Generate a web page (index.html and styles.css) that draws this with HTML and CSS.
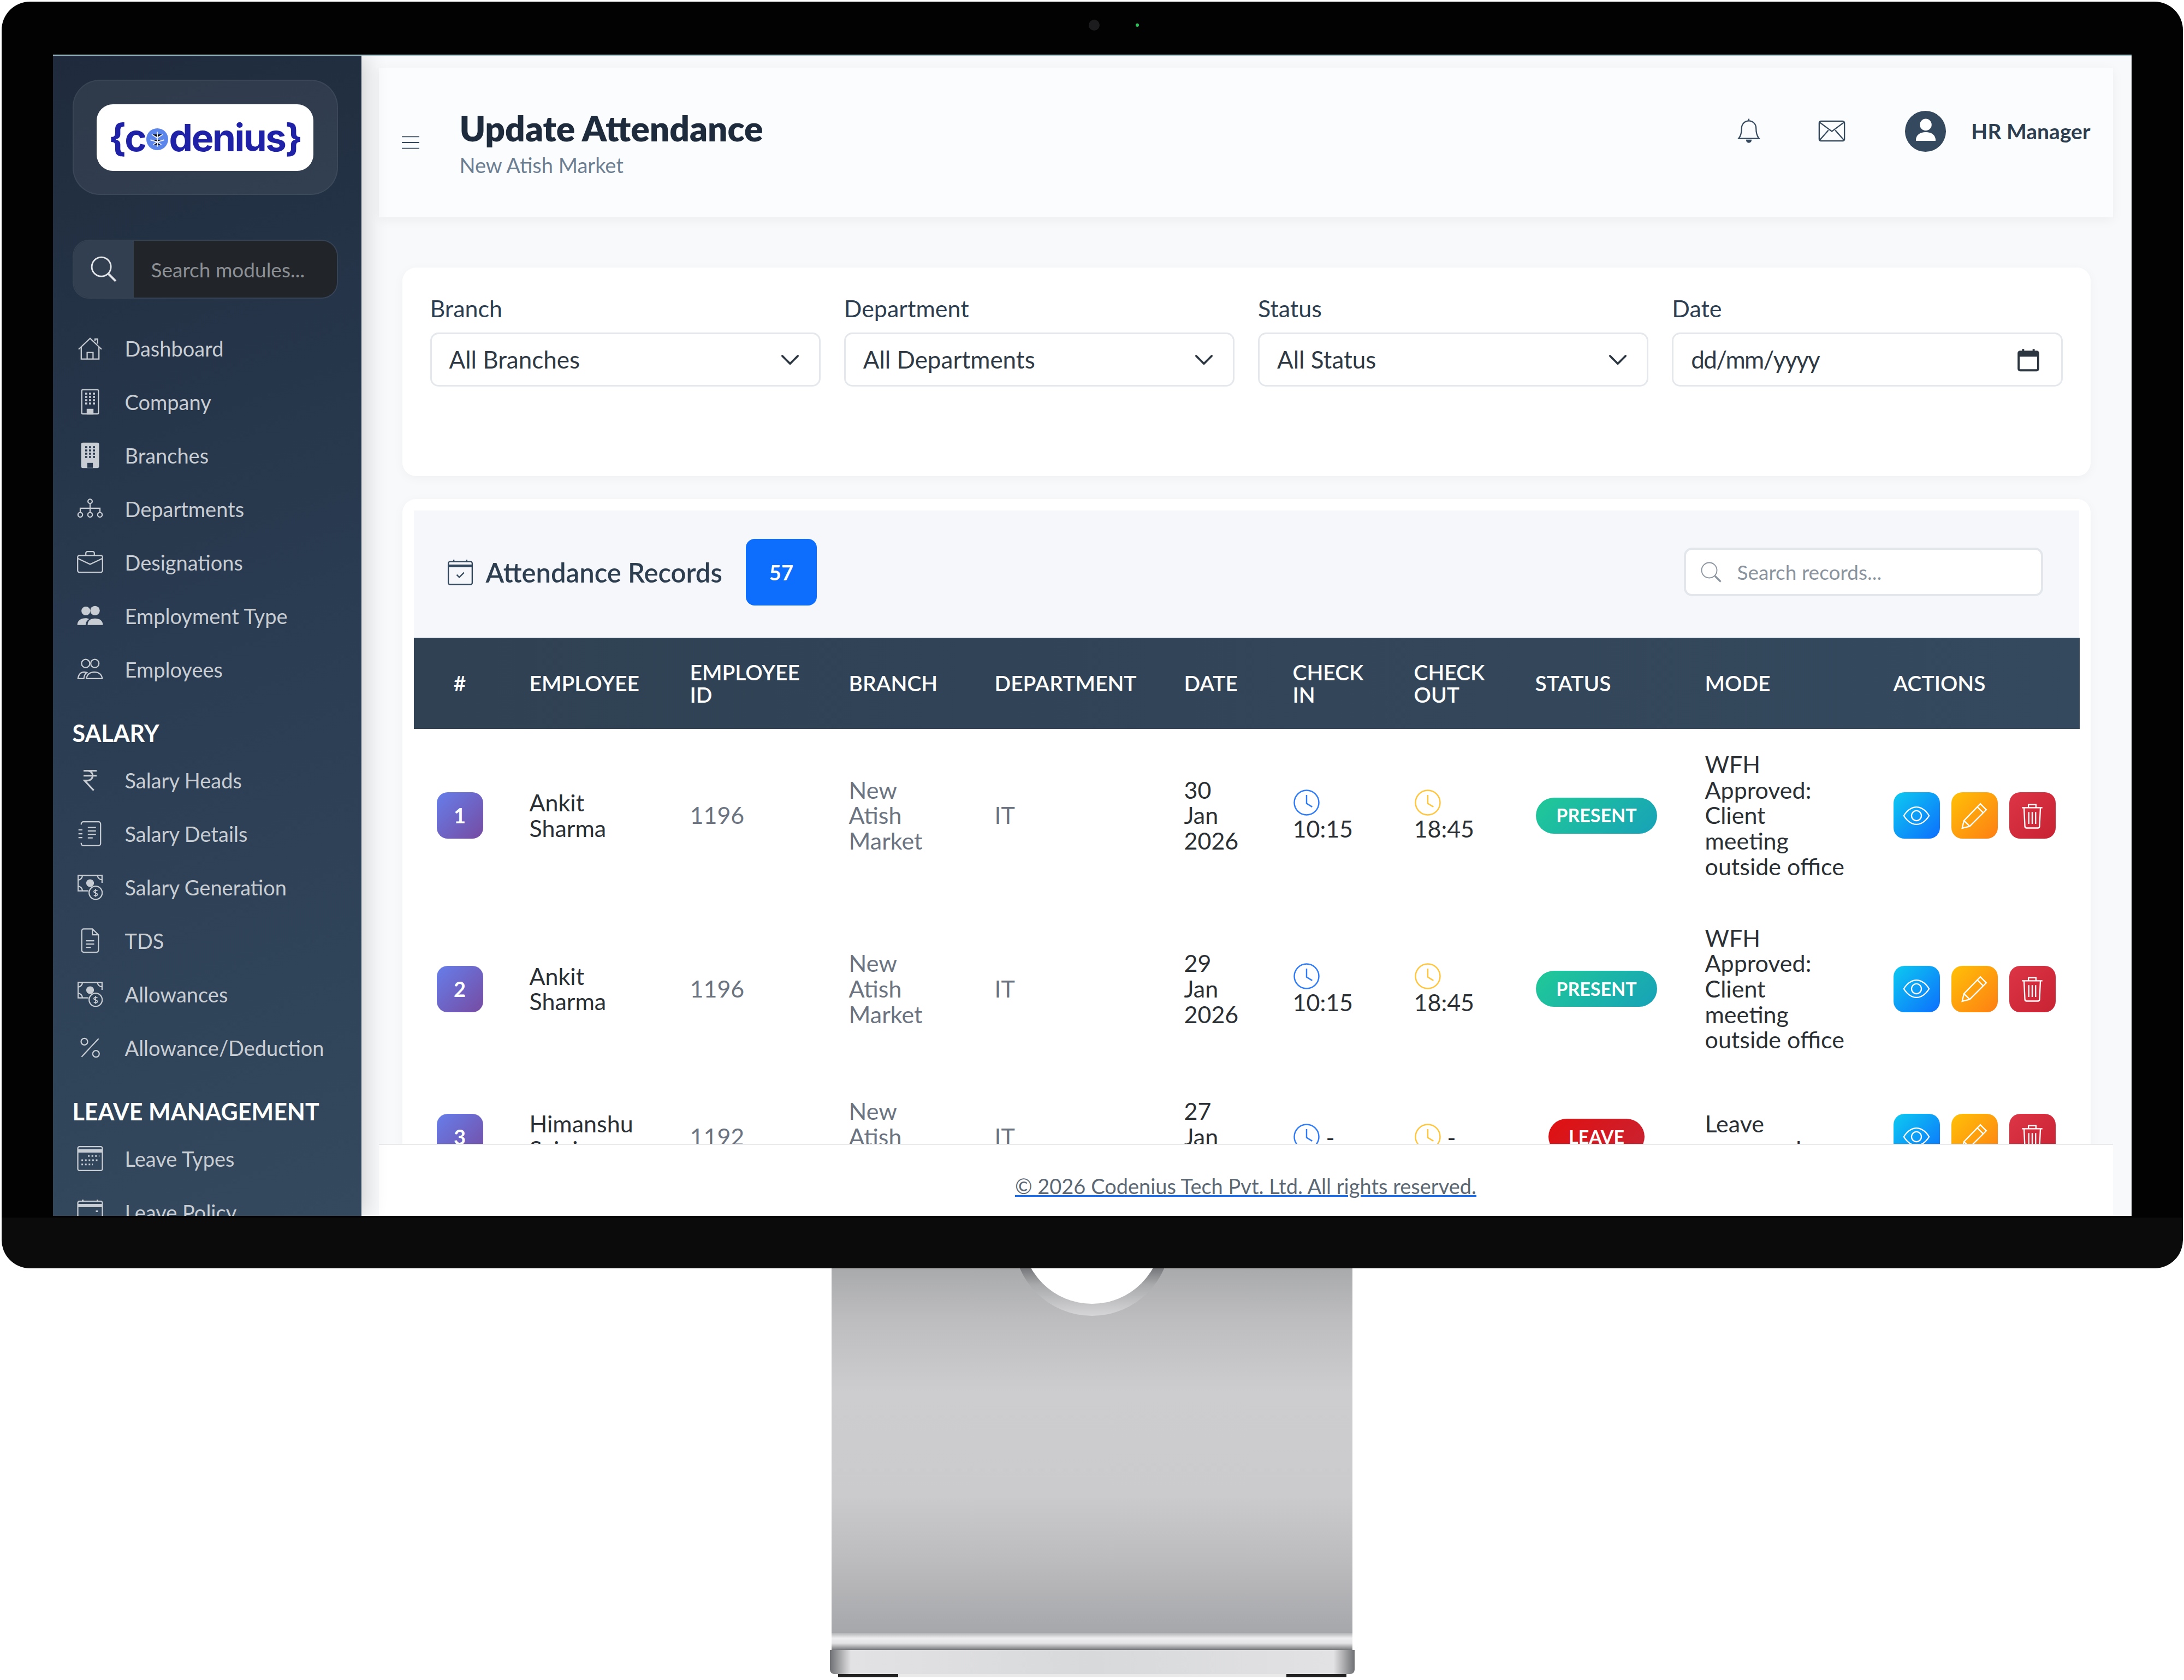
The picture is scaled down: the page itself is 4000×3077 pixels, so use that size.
FILE: index.html
```html
<!DOCTYPE html>
<html lang="en">
<head>
    <meta charset="UTF-8">
    <title>Update Attendance</title>
    <link rel="stylesheet" href="styles.css">
</head>
<body>
<svg class="sprite" xmlns="http://www.w3.org/2000/svg">
    <symbol id="i-house" viewBox="0 0 16 16"><path d="M1 8.6 8 1.9l7 6.7M2.6 7.2v7.3h10.8V7.2M6.2 14.5v-4h3.6v4M11 3.6V2.3h1.6v2.9"/></symbol>
    <symbol id="i-building" viewBox="0 0 16 16"><rect x="2.9" y=".6" width="10.2" height="14.8" rx=".7"/><path d="M5 3h6M5 5h6M5 7h6M5 9h6" stroke-dasharray="1.3 1.05" stroke-width="1.2"/><path d="M6.3 15.4v-2.8h3.4v2.8z" fill="currentColor"/></symbol>
    <symbol id="i-building-fill" viewBox="0 0 16 16"><rect x="2.9" y=".6" width="10.2" height="14.8" rx=".7" fill="currentColor"/><path d="M5 3h6M5 5h6M5 7h6M5 9h6" stroke="#293a4e" stroke-dasharray="1.3 1.05" stroke-width="1.2"/><path d="M6.3 15.6v-3h3.4v3z" fill="#293a4e" stroke="none"/></symbol>
    <symbol id="i-diagram" viewBox="0 0 16 16"><circle cx="8" cy="3.4" r="1.3"/><circle cx="2" cy="11.6" r="1.4"/><circle cx="8" cy="11.6" r="1.4"/><circle cx="14" cy="11.6" r="1.4"/><path d="M8 4.7v5.5M2 10.2V7.6h12v2.6"/></symbol>
    <symbol id="i-briefcase" viewBox="0 0 16 16"><rect x=".4" y="3.8" width="15.2" height="10.2" rx="1"/><path d="M5.4 3.8V2.4a1 1 0 0 1 1-1h3.2a1 1 0 0 1 1 1v1.4M.4 5.6 8 9.2l7.6-3.6"/></symbol>
    <symbol id="i-people-fill" viewBox="0 0 16 16"><g fill="currentColor" stroke="none"><circle cx="5.4" cy="5" r="2.7"/><circle cx="11" cy="4.8" r="2.9"/><path d="M.2 13.6c0-2.8 2.2-4.2 5-4.2.9 0 1.7.2 2.3.5C6 10.8 5.3 12.1 5.3 13.6z"/><path d="M6.5 13.6c0-2.8 1.9-4 4.5-4s4.8 1.2 4.8 4z"/></g></symbol>
    <symbol id="i-people" viewBox="0 0 16 16"><circle cx="5.3" cy="4.4" r="2.5"/><circle cx="10.9" cy="4.4" r="2.5"/><path d="M.6 13.6c.3-2 1.3-3.9 3.7-4 .7 0 1.2.1 1.7.3-1 .8-1.7 2.2-1.8 3.7zM5.8 13.6c.2-2.4 2.1-4 4.8-4s4.6 1.6 4.8 4z"/></symbol>
    <symbol id="i-rupee" viewBox="0 0 16 16"><path stroke-width="1.05" d="M4 2.2h8M4 5.2h8M4 2.2h2.6a3 3 0 0 1 0 6H4.6l5.6 6"/></symbol>
    <symbol id="i-journal" viewBox="0 0 16 16"><path d="M2.6 2.4V2A1.3 1.3 0 0 1 3.9.7h9.2a1.3 1.3 0 0 1 1.3 1.3v12a1.3 1.3 0 0 1-1.3 1.3H3.9A1.3 1.3 0 0 1 2.6 14v-.4"/><path d="M6.6 4.2h5M6.6 6.3h5M6.6 8.4h5M6.6 10.5h3M.9 5.6h2.4M.9 8h2.4M.9 10.4h2.4"/></symbol>
    <symbol id="i-cash" viewBox="0 0 16 16"><path d="M7 10.2H.7V.8h14.6v4.5"/><path d="M.7 3.6A2.8 2.8 0 0 0 3.3.8M.7 7.4a2.8 2.8 0 0 1 2.6 2.8M12.5.8a2.8 2.8 0 0 0 2.8 2.6"/><circle cx="8" cy="5.5" r="2" fill="currentColor"/><circle cx="11.4" cy="11.4" r="4"/><path stroke-width=".6" d="M12.5 10.3c-.4-.5-2.2-.6-2.2.4s2.2.7 2.2 1.7-1.8 1-2.2.4M11.4 9v4.8"/></symbol>
    <symbol id="i-file" viewBox="0 0 16 16"><path d="M2.9 2A1.2 1.2 0 0 1 4.1.8h5.3l3.7 3.6v9.4a1.2 1.2 0 0 1-1.2 1.2H4.1a1.2 1.2 0 0 1-1.2-1.2zM9.4.8v3.6h3.7M5.5 8h5M5.5 10h5M5.5 12h3"/></symbol>
    <symbol id="i-percent" viewBox="0 0 16 16"><circle cx="4.5" cy="4.3" r="2"/><circle cx="11.6" cy="11.7" r="2"/><path d="M13.2 2.4 2.8 13.6"/></symbol>
    <symbol id="i-cal-week" viewBox="0 0 16 16"><rect x=".5" y=".7" width="15" height="14.6" rx="1"/><path d="M.5 3.3h15" stroke-width="2"/><path d="M6.7 6.4h7M2.7 9h10.8M2.7 11.6h7" stroke-dasharray="1 1.2" stroke-width="1"/></symbol>
    <symbol id="i-cal" viewBox="0 0 16 16"><rect x=".5" y="1.4" width="15" height="14" rx="1"/><path d="M.5 4h15" stroke-width="2"/><path d="M3.5.4v1.5M12.5.4v1.5M11.5 7.5h1.2" stroke-width="1"/></symbol>
    <symbol id="i-search" viewBox="0 0 16 16"><circle cx="6.6" cy="6.6" r="5.6"/><path d="M10.8 10.8 15 15" stroke-width="1.3"/></symbol>
    <symbol id="i-bell" viewBox="0 0 16 16"><path d="M8 1.8a4.4 4.4 0 0 0-4.4 4.4c0 3.6-.8 5.2-1.8 6.3h12.4c-1-1.1-1.8-2.7-1.8-6.3A4.4 4.4 0 0 0 8 1.8zM8 .5v1.3"/><path d="M6.7 13.6a1.3 1.3 0 0 0 2.6 0z" fill="currentColor"/></symbol>
    <symbol id="i-mail" viewBox="0 0 16 16"><rect x=".6" y="2.2" width="14.8" height="11.6" rx="1"/><path d="M1 3l7 5.2L15 3M1 13.2l5-5.7M15 13.2l-5-5.7"/></symbol>
    <symbol id="i-user" viewBox="0 0 16 16"><circle cx="8" cy="4.8" r="2.6" fill="currentColor"/><path d="M3.4 12.6c0-2.4 1.9-3.7 4.6-3.7s4.6 1.3 4.6 3.7z" fill="currentColor"/></symbol>
    <symbol id="i-menu" viewBox="0 0 16 16"><path d="M.5 3h15M.5 8h15M.5 13h15"/></symbol>
    <symbol id="i-chevron" viewBox="0 0 16 16"><path stroke-width="1.5" stroke-linecap="round" stroke-linejoin="round" d="m2 5 6 6 6-6"/></symbol>
    <symbol id="i-date" viewBox="0 0 16 16"><rect x="1.5" y="2.6" width="13" height="12.4" rx="1" stroke-width="1.4"/><path d="M1.5 4.6h13" stroke-width="2.6"/><path d="M4.5.8v2M11.5.8v2" stroke-width="1.4"/></symbol>
    <symbol id="i-cal-check" viewBox="0 0 16 16"><rect x="1" y="1.8" width="14" height="13.4" rx="1"/><path d="M1 4.3h14" stroke-width="1.6"/><path d="M4.2.6V2M11.8.6V2"/><path d="m5.9 9.5 1.5 1.5 2.8-2.8"/></symbol>
    <symbol id="i-clock" viewBox="0 0 16 16"><circle cx="8" cy="8" r="7.2"/><path d="M8 3.5V8.5l3.3 2"/></symbol>
    <symbol id="i-eye" viewBox="0 0 16 16"><path d="M.6 8S3.4 2.9 8 2.9 15.4 8 15.4 8 12.6 13.1 8 13.1.6 8 .6 8z"/><circle cx="8" cy="8" r="2.9"/></symbol>
    <symbol id="i-pencil" viewBox="0 0 16 16"><path d="m11.5 1 3.5 3.5-9.7 9.7L.9 15.3l1-4.4zM9.7 2.8l3.5 3.5M1.9 10.9l3.4 3.3"/></symbol>
    <symbol id="i-trash" viewBox="0 0 16 16"><path d="M2 3.3h12M5.8 3.3V1.5h4.4v1.8M3.2 3.3l.5 11a1 1 0 0 0 1 .9h6.6a1 1 0 0 0 1-.9l.5-11M6 5.8v7M8 5.8v7M10 5.8v7"/></symbol>
    <symbol id="i-brain" viewBox="0 0 16 16"><circle cx="8" cy="8" r="8" fill="#5d86ea" stroke="none"/><path stroke="#e6eeff" stroke-width=".8" d="M8 2.5v11M4 4.5 8 7l4-2.5M3 8.5l5 1.5 5-1.500M5 12l3-2 3 2"/></symbol>
</svg>

<div class="monitor">
    <div class="bezel">
        <div class="camera-bar">
            <span class="camera"></span>
            <span class="led"></span>
        </div>
        <div class="screen">
            <aside class="sidebar">
                <div class="logo-box">
                    <div class="logo"><span>{c</span><svg class="logo-brain"><use href="#i-brain"/></svg><span>denius}</span></div>
                </div>
                <div class="side-search">
                    <span class="side-search-icon"><svg class="ic"><use href="#i-search"/></svg></span>
                    <input type="text" placeholder="Search modules...">
                </div>
                <nav>
                    <a class="nav-item" href="#"><svg class="ic"><use href="#i-house"/></svg>Dashboard</a>
                    <a class="nav-item" href="#"><svg class="ic"><use href="#i-building"/></svg>Company</a>
                    <a class="nav-item" href="#"><svg class="ic"><use href="#i-building-fill"/></svg>Branches</a>
                    <a class="nav-item" href="#"><svg class="ic"><use href="#i-diagram"/></svg>Departments</a>
                    <a class="nav-item" href="#"><svg class="ic"><use href="#i-briefcase"/></svg>Designations</a>
                    <a class="nav-item" href="#"><svg class="ic"><use href="#i-people-fill"/></svg>Employment Type</a>
                    <a class="nav-item" href="#"><svg class="ic"><use href="#i-people"/></svg>Employees</a>
                    <h4 class="nav-title">SALARY</h4>
                    <a class="nav-item" href="#"><svg class="ic"><use href="#i-rupee"/></svg>Salary Heads</a>
                    <a class="nav-item" href="#"><svg class="ic"><use href="#i-journal"/></svg>Salary Details</a>
                    <a class="nav-item" href="#"><svg class="ic"><use href="#i-cash"/></svg>Salary Generation</a>
                    <a class="nav-item" href="#"><svg class="ic"><use href="#i-file"/></svg>TDS</a>
                    <a class="nav-item" href="#"><svg class="ic"><use href="#i-cash"/></svg>Allowances</a>
                    <a class="nav-item" href="#"><svg class="ic"><use href="#i-percent"/></svg>Allowance/Deduction</a>
                    <h4 class="nav-title">LEAVE MANAGEMENT</h4>
                    <a class="nav-item" href="#"><svg class="ic"><use href="#i-cal-week"/></svg>Leave Types</a>
                    <a class="nav-item" href="#"><svg class="ic"><use href="#i-cal"/></svg>Leave Policy</a>
                </nav>
            </aside>

            <main class="main">
                <header class="topbar">
                    <svg class="ic menu-icon"><use href="#i-menu"/></svg>
                    <div class="page-title">
                        <h1>Update Attendance</h1>
                        <p>New Atish Market</p>
                    </div>
                    <div class="top-actions">
                        <svg class="ic bell-icon"><use href="#i-bell"/></svg>
                        <svg class="ic mail-icon"><use href="#i-mail"/></svg>
                        <span class="avatar"><svg class="ic"><use href="#i-user"/></svg></span>
                        <span class="user-name">HR Manager</span>
                    </div>
                </header>

                <div class="content">
                    <section class="card filters">
                        <div class="field">
                            <label>Branch</label>
                            <div class="control">All Branches<svg class="ic"><use href="#i-chevron"/></svg></div>
                        </div>
                        <div class="field">
                            <label>Department</label>
                            <div class="control">All Departments<svg class="ic"><use href="#i-chevron"/></svg></div>
                        </div>
                        <div class="field">
                            <label>Status</label>
                            <div class="control">All Status<svg class="ic"><use href="#i-chevron"/></svg></div>
                        </div>
                        <div class="field">
                            <label>Date</label>
                            <div class="control date-control">dd/mm/yyyy<svg class="ic date-icon"><use href="#i-date"/></svg></div>
                        </div>
                    </section>

                    <section class="card records">
                        <div class="records-head">
                            <svg class="ic records-icon"><use href="#i-cal-check"/></svg>
                            <h3>Attendance Records</h3>
                            <span class="count">57</span>
                            <div class="records-search">
                                <svg class="ic"><use href="#i-search"/></svg>
                                <input type="text" placeholder="Search records...">
                            </div>
                        </div>
                        <table>
                            <thead>
                                <tr>
                                    <th class="col-num">#</th>
                                    <th class="col-emp">Employee</th>
                                    <th class="col-id">Employee ID</th>
                                    <th class="col-branch">Branch</th>
                                    <th class="col-dept">Department</th>
                                    <th class="col-date">Date</th>
                                    <th class="col-time">Check In</th>
                                    <th class="col-time">Check Out</th>
                                    <th class="col-status">Status</th>
                                    <th class="col-mode">Mode</th>
                                    <th class="col-actions">Actions</th>
                                </tr>
                            </thead>
                            <tbody>
                                <tr>
                                    <td class="num"><span class="row-num">1</span></td>
                                    <td class="strong">Ankit Sharma</td>
                                    <td class="muted">1196</td>
                                    <td class="muted">New Atish Market</td>
                                    <td class="muted">IT</td>
                                    <td class="strong">30 Jan 2026</td>
                                    <td class="strong"><svg class="ic clock in"><use href="#i-clock"/></svg> 10:15</td>
                                    <td class="strong"><svg class="ic clock out"><use href="#i-clock"/></svg> 18:45</td>
                                    <td class="status"><span class="pill present">PRESENT</span></td>
                                    <td class="strong">WFH Approved: Client meeting outside office</td>
                                    <td>
                                        <div class="actions">
                                            <button class="view"><svg class="ic"><use href="#i-eye"/></svg></button>
                                            <button class="edit"><svg class="ic"><use href="#i-pencil"/></svg></button>
                                            <button class="remove"><svg class="ic"><use href="#i-trash"/></svg></button>
                                        </div>
                                    </td>
                                </tr>
                                <tr>
                                    <td class="num"><span class="row-num">2</span></td>
                                    <td class="strong">Ankit Sharma</td>
                                    <td class="muted">1196</td>
                                    <td class="muted">New Atish Market</td>
                                    <td class="muted">IT</td>
                                    <td class="strong">29 Jan 2026</td>
                                    <td class="strong"><svg class="ic clock in"><use href="#i-clock"/></svg> 10:15</td>
                                    <td class="strong"><svg class="ic clock out"><use href="#i-clock"/></svg> 18:45</td>
                                    <td class="status"><span class="pill present">PRESENT</span></td>
                                    <td class="strong">WFH Approved: Client meeting outside office</td>
                                    <td>
                                        <div class="actions">
                                            <button class="view"><svg class="ic"><use href="#i-eye"/></svg></button>
                                            <button class="edit"><svg class="ic"><use href="#i-pencil"/></svg></button>
                                            <button class="remove"><svg class="ic"><use href="#i-trash"/></svg></button>
                                        </div>
                                    </td>
                                </tr>
                                <tr>
                                    <td class="num"><span class="row-num">3</span></td>
                                    <td class="strong">Himanshu Saini</td>
                                    <td class="muted">1192</td>
                                    <td class="muted">New Atish Market</td>
                                    <td class="muted">IT</td>
                                    <td class="strong">27 Jan 2026</td>
                                    <td class="strong"><svg class="ic clock in"><use href="#i-clock"/></svg> -</td>
                                    <td class="strong"><svg class="ic clock out"><use href="#i-clock"/></svg> -</td>
                                    <td class="status"><span class="pill leave">LEAVE</span></td>
                                    <td class="strong">Leave approved</td>
                                    <td>
                                        <div class="actions">
                                            <button class="view"><svg class="ic"><use href="#i-eye"/></svg></button>
                                            <button class="edit"><svg class="ic"><use href="#i-pencil"/></svg></button>
                                            <button class="remove"><svg class="ic"><use href="#i-trash"/></svg></button>
                                        </div>
                                    </td>
                                </tr>
                            </tbody>
                        </table>
                    </section>
                </div>

                <footer class="footer"><a href="#">© 2026 Codenius Tech Pvt. Ltd. All rights reserved.</a></footer>
            </main>
        </div>
    </div>

    <div class="stand">
        <span class="stand-hole"></span>
    </div>
    <div class="stand-lip"></div>
    <div class="stand-base"></div>
    <div class="stand-foot"></div>
</div>
</body>
</html>
```

FILE: styles.css
```css
* {
    box-sizing: border-box;
}
body {
    margin: 0;
    background: #fff;
    font-family: "Lato", "Noto Sans", sans-serif;
    color: #212529;
}
.sprite {
    display: none;
}
.ic {
    fill: none;
    stroke: currentColor;
    stroke-width: 0.75;
}

/* monitor frame */
.monitor {
    width: 4000px;
    height: 3077px;
    display: flex;
    flex-direction: column;
    align-items: center;
    overflow: hidden;
}
.bezel {
    width: 3995px;
    height: 2320px;
    margin-top: 3px;
    padding: 0 94px;
    background: linear-gradient(#020202 96%, #0b0b0b 96%);
    border-radius: 52px;
    flex-shrink: 0;
}
.camera-bar {
    height: 97px;
    display: flex;
    align-items: flex-start;
    justify-content: center;
    gap: 66px;
    padding-top: 33px;
    padding-left: 79px;
}
.camera {
    width: 20px;
    height: 20px;
    border-radius: 50%;
    background: #1c1c1e;
}
.led {
    width: 6px;
    height: 6px;
    margin-top: 7px;
    border-radius: 50%;
    background: #2fc25b;
}
.screen {
    height: 2127px;
    display: flex;
    overflow: hidden;
    border-top: 2px solid #9fc0c4;
    background: #f8f9fb;
}

/* sidebar */
.sidebar {
    width: 565px;
    flex-shrink: 0;
    padding: 44px 43px 0 36px;
    overflow: hidden;
    background: linear-gradient(160deg, #1f2b3c 0%, #2a3c52 50%, #34495e 100%);
    box-shadow: 8px 0 38px rgba(0, 0, 0, 0.16);
    position: relative;
    z-index: 2;
}
.logo-box {
    height: 211px;
    display: flex;
    align-items: center;
    justify-content: center;
    background: rgba(255, 255, 255, 0.07);
    border: 2px solid rgba(255, 255, 255, 0.05);
    border-radius: 50px;
}
.logo {
    width: 397px;
    height: 122px;
    display: flex;
    align-items: center;
    justify-content: center;
    background: #fff;
    border-radius: 30px;
    color: #1f22a6;
    font-family: "Inter", sans-serif;
    font-weight: 700;
    font-size: 69px;
    letter-spacing: -2.5px;
}
.logo-brain {
    width: 40px;
    height: 40px;
    margin: 6px 1px 0 2px;
}
.side-search {
    height: 108px;
    margin-top: 82px;
    display: flex;
    border: 2px solid rgba(255, 255, 255, 0.08);
    border-radius: 30px;
    overflow: hidden;
}
.side-search-icon {
    width: 110px;
    display: flex;
    align-items: center;
    justify-content: center;
    background: #323f50;
    color: #e4e7ea;
}
.side-search-icon .ic {
    width: 50px;
    height: 50px;
    stroke-width: 0.9;
}
.side-search input {
    flex: 1;
    min-width: 0;
    padding: 0 32px;
    border: 0;
    background: #212529;
    font-family: inherit;
    font-size: 37px;
    color: #fff;
}
.side-search input::placeholder {
    color: #8c9095;
    opacity: 1;
}
nav {
    margin-top: 42px;
}
.nav-item {
    height: 98px;
    display: flex;
    align-items: center;
    gap: 40px;
    padding-left: 8px;
    color: #c8cdd3;
    font-size: 38px;
    text-decoration: none;
}
.nav-item .ic {
    width: 48px;
    height: 48px;
    flex-shrink: 0;
}
.nav-title {
    margin: 43px 0 12px;
    color: #fff;
    font-size: 43px;
    line-height: 50px;
    font-weight: 700;
}

/* main column */
.main {
    flex: 1;
    min-width: 0;
    display: flex;
    flex-direction: column;
    padding: 0 34px 0 32px;
}
.topbar {
    height: 274px;
    margin-top: 22px;
    padding: 0 41px;
    flex-shrink: 0;
    display: flex;
    align-items: center;
    background: #fbfcfe;
    box-shadow: 0 5px 20px rgba(0, 0, 0, 0.05);
}
.menu-icon {
    width: 34px;
    height: 34px;
    color: #34495e;
    stroke-width: 0.9;
}
.page-title {
    margin-left: 73px;
    margin-bottom: 2px;
}
.page-title h1 {
    margin: 0;
    font-size: 64px;
    line-height: 84px;
    font-weight: 800;
    color: #1e2b3c;
}
.page-title p {
    margin: 0;
    font-size: 38px;
    line-height: 50px;
    color: #6c7f92;
}
.top-actions {
    margin-left: auto;
    margin-bottom: 42px;
    display: flex;
    align-items: center;
    color: #34495e;
}
.bell-icon {
    width: 48px;
    height: 48px;
}
.mail-icon {
    width: 50px;
    height: 50px;
    margin-left: 103px;
}
.avatar {
    width: 75px;
    height: 75px;
    margin-left: 109px;
    display: flex;
    align-items: center;
    justify-content: center;
    border-radius: 50%;
    background: #34495e;
    color: #fff;
}
.avatar .ic {
    width: 58px;
    height: 58px;
}
.user-name {
    margin-left: 46px;
    font-size: 39px;
    font-weight: 700;
    color: #2c3e50;
}
.content {
    flex: 1;
    min-height: 0;
    overflow: hidden;
    padding: 92px 41px 0 43px;
}
.card {
    background: #fff;
    border-radius: 25px;
    box-shadow: 0 4px 20px rgba(0, 0, 0, 0.04);
}

/* filters */
.filters {
    padding: 50px 51px 164px;
    display: grid;
    grid-template-columns: repeat(4, 1fr);
    gap: 43px;
}
.field label {
    display: block;
    margin-bottom: 20px;
    font-size: 43px;
    line-height: 49px;
    color: #2c3e50;
}
.control {
    height: 99px;
    padding: 0 32px;
    display: flex;
    align-items: center;
    justify-content: space-between;
    border: 3px solid #e4e8ec;
    border-radius: 15px;
    font-size: 44px;
    line-height: 93px;
    color: #2f3a45;
}
.date-control {
    letter-spacing: -1.6px;
}
.control .ic {
    width: 38px;
    height: 38px;
    margin-right: 2px;
    color: #2c3640;
}
.control .date-icon {
    width: 44px;
    height: 44px;
    margin-right: 6px;
}

/* records table */
.records {
    margin-top: 42px;
    padding: 21px 21px 0;
}
.records-head {
    height: 233px;
    padding: 0 66px 8px 60px;
    display: flex;
    align-items: center;
    background: #f5f7fa;
}
.records-icon {
    width: 50px;
    height: 50px;
    color: #34495e;
}
.records-head h3 {
    margin: 0 43px 0 22px;
    font-size: 49px;
    font-weight: 600;
    color: #2c3e50;
}
.count {
    width: 130px;
    height: 122px;
    display: flex;
    align-items: center;
    justify-content: center;
    background: #0d6efd;
    border-radius: 16px;
    color: #fff;
    font-size: 38px;
    font-weight: 700;
}
.records-search {
    width: 658px;
    height: 89px;
    margin-left: auto;
    padding: 0 26px;
    display: flex;
    align-items: center;
    gap: 26px;
    background: #fff;
    border: 4px solid #e3e7ec;
    border-radius: 15px;
    color: #8a949e;
}
.records-search .ic {
    width: 40px;
    height: 40px;
    flex-shrink: 0;
}
.records-search input {
    flex: 1;
    min-width: 0;
    border: 0;
    outline: 0;
    font-family: inherit;
    font-size: 37px;
}
.records-search input::placeholder {
    color: #8a949e;
    opacity: 1;
}
table {
    width: 100%;
    table-layout: fixed;
    border-collapse: collapse;
    font-size: 43px;
    line-height: 46.7px;
}
thead {
    background: linear-gradient(90deg, #2f4153, #35495e);
    color: #fff;
}
th {
    height: 167px;
    padding: 0 43px;
    text-align: left;
    font-size: 39px;
    line-height: 41px;
    font-weight: 600;
    text-transform: uppercase;
}
.col-num { width: 169px; padding: 0; text-align: center; }
.col-emp { width: 294px; }
.col-id { width: 291px; }
.col-branch { width: 267px; }
.col-dept { width: 347px; }
.col-date { width: 199px; }
.col-time { width: 222px; }
.col-status { width: 311px; }
.col-mode { width: 345px; }
.col-actions { width: 384px; }
td {
    padding: 42px 43px;
    vertical-align: middle;
}
td.num {
    padding: 0;
    text-align: center;
}
td.status {
    padding: 0;
    text-align: center;
}
.strong {
    color: #2b3035;
}
.muted {
    color: #6b7480;
}
.row-num {
    width: 85px;
    height: 85px;
    display: inline-flex;
    align-items: center;
    justify-content: center;
    vertical-align: middle;
    background: linear-gradient(135deg, #667eea, #764ba2);
    border-radius: 20px;
    color: #fff;
    font-size: 38px;
    font-weight: 700;
}
.clock {
    width: 50px;
    height: 50px;
    vertical-align: -8px;
    stroke-width: 0.8;
}
.clock.in { color: #2f7cf6; }
.clock.out { color: #ffc53d; }
.pill {
    height: 66px;
    display: inline-flex;
    align-items: center;
    padding: 0 37px;
    vertical-align: middle;
    border-radius: 33px;
    color: #fff;
    font-size: 34px;
    font-weight: 700;
}
.pill.present { background: linear-gradient(135deg, #20c997, #17a2b8); }
.pill.leave { background: linear-gradient(135deg, #e01010, #c82333); }
.actions {
    display: flex;
    gap: 21px;
}
.actions button {
    width: 85px;
    height: 85px;
    padding: 0;
    display: flex;
    align-items: center;
    justify-content: center;
    border: 0;
    border-radius: 20px;
    color: #fff;
}
.actions .ic {
    width: 50px;
    height: 50px;
}
.view { background: linear-gradient(135deg, #0dcaf0, #0d6efd); }
.edit { background: linear-gradient(135deg, #ffc107, #fd7e14); }
.remove { background: linear-gradient(135deg, #dc3545, #c82333); }

/* footer */
.footer {
    height: 132px;
    padding-top: 20px;
    flex-shrink: 0;
    display: flex;
    align-items: center;
    justify-content: center;
    background: #fff;
    border-top: 2px solid #e8eaee;
    font-size: 38px;
}
.footer a {
    color: #5c6873;
    text-decoration-color: #0d6efd;
    text-decoration-thickness: 3px;
}

/* stand */
.stand {
    width: 954px;
    height: 668px;
    flex-shrink: 0;
    position: relative;
    overflow: hidden;
    background: linear-gradient(#a9aaac 0%, #bdbdc0 14%, #cdcdd0 34%, #cbcbce 62%, #bcbcbf 80%, #a6a7aa 100%);
}
.stand-hole {
    position: absolute;
    left: 333px;
    top: -201px;
    width: 288px;
    height: 288px;
    border-radius: 50%;
    background: linear-gradient(#77787b 70%, #a8a9ab 80%, #d6d6d8 100%);
}
.stand-hole::after {
    content: "";
    position: absolute;
    left: 16px;
    top: 10px;
    width: 256px;
    height: 256px;
    border-radius: 50%;
    background: #fff;
}
.stand-lip {
    width: 954px;
    height: 31px;
    flex-shrink: 0;
    background: linear-gradient(#b4b5b7, #eeeef0 30%, #e4e4e6 60%, #76777a 100%);
}
.stand-base {
    width: 961px;
    height: 44px;
    flex-shrink: 0;
    border-radius: 0 0 8px 8px;
    background: linear-gradient(90deg, #6f7073, #e2e2e4 4%, #d8d9db 50%, #e2e2e4 96%, #6f7073);
}
.stand-foot {
    width: 961px;
    height: 6px;
    flex-shrink: 0;
    background: linear-gradient(90deg, #fff 1.6%, #222 1.6%, #222 13%, #e9e9e9 13%, #e9e9e9 87%, #222 87%, #222 98.4%, #fff 98.4%);
}
```
